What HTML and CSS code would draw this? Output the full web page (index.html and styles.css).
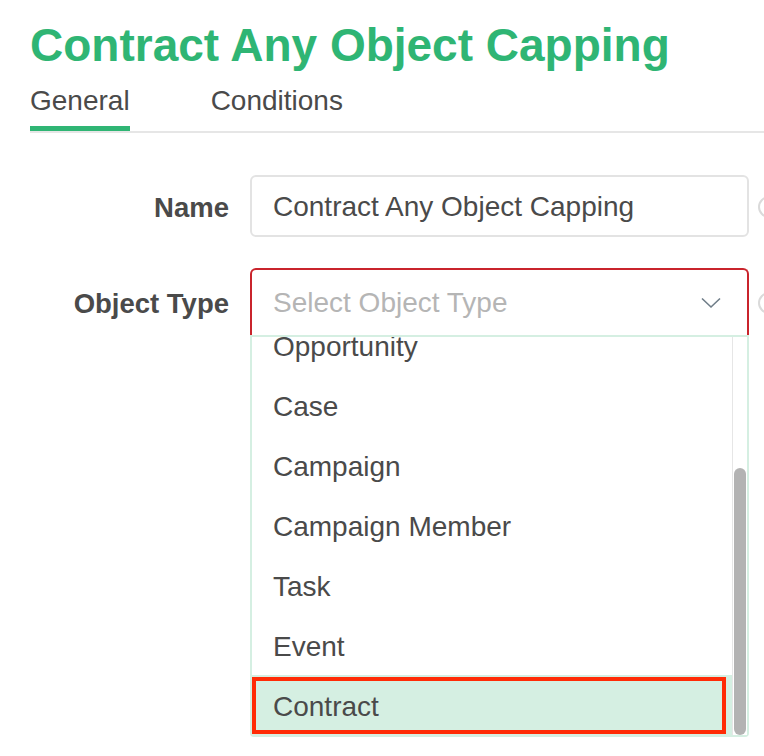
FILE: index.html
```html
<!DOCTYPE html>
<html>
<head>
<meta charset="utf-8">
<link rel="stylesheet" href="styles.css">
</head>
<body>
<div class="page">
  <h1 class="title">Contract Any Object Capping</h1>
  <div class="tabs">
    <div class="tab active">General</div>
    <div class="tab">Conditions</div>
  </div>
  <div class="form">
    <div class="row">
      <label class="label">Name</label>
      <div class="field">
        <div class="input">Contract Any Object Capping</div>
      </div>
      <span class="help"></span>
    </div>
    <div class="row row-select">
      <label class="label">Object Type</label>
      <div class="field">
        <div class="select">
          <span class="placeholder">Select Object Type</span>
          <svg class="chevron" width="20" height="12" viewBox="0 0 20 12"><path d="M1 1.5 L10 10 L19 1.5" fill="none" stroke="#6f7d88" stroke-width="1.6"/></svg>
        </div>
        <div class="dropdown">
          <div class="list">
            <div class="item first">Opportunity</div>
            <div class="item">Case</div>
            <div class="item">Campaign</div>
            <div class="item">Campaign Member</div>
            <div class="item">Task</div>
            <div class="item">Event</div>
            <div class="item selected">Contract</div>
          </div>
          <div class="track"><div class="thumb"></div></div>
        </div>
      </div>
      <span class="help"></span>
    </div>
  </div>
</div>
</body>
</html>
```
FILE: styles.css
```css
html, body {
  margin: 0;
  padding: 0;
  background: #ffffff;
  overflow: hidden;
}
body {
  width: 764px;
  height: 756px;
  font-family: "Liberation Sans", Arial, Helvetica, sans-serif;
  color: #4a4a4a;
}
.page {
  padding-left: 30px;
}
.title {
  margin: 19px 0 0 0;
  font-size: 46px;
  font-weight: bold;
  color: #2fb574;
  line-height: 53px;
  white-space: nowrap;
}
.tabs {
  display: flex;
  gap: 81px;
  margin-top: 13px;
  border-bottom: 2px solid #e6e6e6;
}
.tab {
  font-size: 28px;
  line-height: 32px;
  padding-bottom: 9px;
  border-bottom: 5px solid transparent;
  color: #4a4a4a;
}
.tab.active {
  border-bottom-color: #2fb574;
}
.form {
  margin-top: 42px;
  display: flex;
  flex-direction: column;
  gap: 31px;
}
.row {
  display: flex;
  align-items: flex-start;
}
.label {
  box-sizing: border-box;
  width: 199px;
  height: 62px;
  flex: none;
  text-align: right;
  font-size: 27.5px;
  font-weight: bold;
  color: #4a4a4a;
  padding-top: 4px;
  line-height: 58px;
  margin-right: 21px;
  white-space: nowrap;
}
.row-select .label {
  height: 68px;
  line-height: 64px;
}
.field {
  width: 499px;
  flex: none;
}
.input {
  box-sizing: border-box;
  height: 62px;
  border: 2px solid #e3e3e3;
  border-radius: 6px;
  padding: 2px 0 0 21px;
  font-size: 28px;
  line-height: 56px;
  color: #4a4a4a;
  white-space: nowrap;
}
.help {
  flex: none;
  width: 22px;
  height: 22px;
  box-sizing: border-box;
  border: 2px solid #dadada;
  border-radius: 50%;
  margin-left: 9px;
  margin-top: 21px;
}
.row-select .help {
  margin-top: 24px;
}
.select {
  box-sizing: border-box;
  height: 67px;
  border: 2px solid #c9242c;
  border-bottom: none;
  border-radius: 6px 6px 0 0;
  padding: 17px 26px 0 21px;
  display: flex;
  align-items: flex-start;
  justify-content: space-between;
}
.placeholder {
  font-size: 28px;
  line-height: 32px;
  color: #b5b5b5;
  white-space: nowrap;
}
.chevron {
  margin-top: 10px;
}
.dropdown {
  box-sizing: border-box;
  height: 402px;
  border: 2px solid #d5efe2;
  border-radius: 0 0 4px 4px;
  display: flex;
  background: #ffffff;
}
.list {
  flex: 1;
  overflow: hidden;
}
.item {
  box-sizing: border-box;
  height: 60px;
  line-height: 56px;
  padding: 4px 0 0 21px;
  font-size: 28px;
  color: #4a4a4a;
  white-space: nowrap;
  position: relative;
}
.item.first {
  margin-top: -22px;
}
.item.selected {
  background: #d5efe2;
}
.item.selected::after {
  content: "";
  position: absolute;
  top: 2px;
  left: 0;
  right: 6px;
  bottom: 1px;
  border: 4px solid #ff2b06;
}
.track {
  flex: none;
  width: 14px;
  border-left: 1px solid #e6e6e6;
  display: flex;
  flex-direction: column;
  justify-content: flex-end;
  background: #ffffff;
}
.thumb {
  height: 267px;
  width: 12px;
  margin-left: 1px;
  background: #b3b3b3;
  border-radius: 6px;
}
```
